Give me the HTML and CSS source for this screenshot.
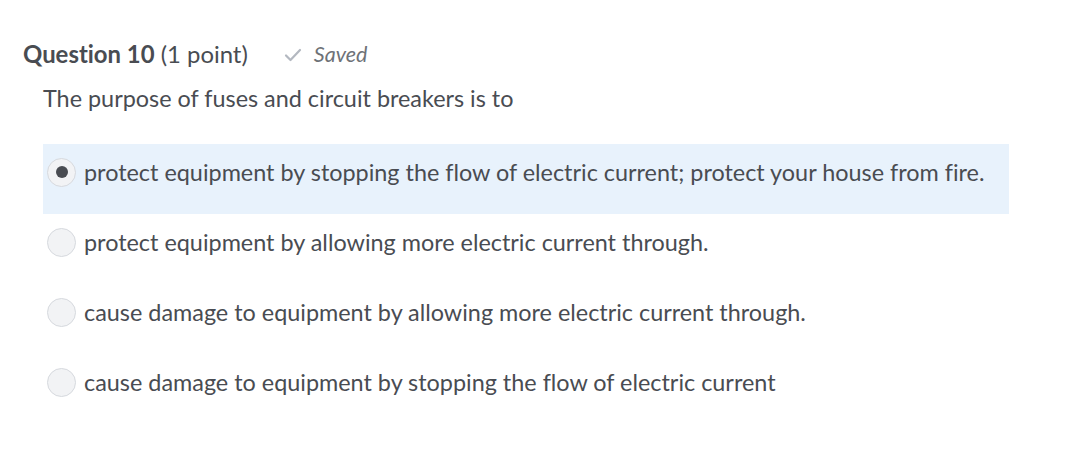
FILE: index.html
```html
<!DOCTYPE html>
<html>
<head>
<meta charset="utf-8">
<link rel="stylesheet" href="styles.css">
</head>
<body>
<div class="question">
  <div class="q-header">
    <h2 class="q-title"><strong>Question 10</strong> <span class="points">(1 point)</span></h2>
    <span class="saved">
      <svg class="check" width="18" height="14" viewBox="0 0 18 14"><path d="M2 7.5 L6.5 12 L16 2" fill="none" stroke="#b3b8c0" stroke-width="2.2" stroke-linecap="round" stroke-linejoin="round"/></svg>
      <em>Saved</em>
    </span>
  </div>
  <p class="q-text">The purpose of fuses and circuit breakers is to</p>
  <div class="options">
    <label class="option selected"><span class="radio"><span class="dot"></span></span><span class="opt-text">protect equipment by stopping the flow of electric current; protect your house from fire.</span></label>
    <label class="option"><span class="radio"></span><span class="opt-text">protect equipment by allowing more electric current through.</span></label>
    <label class="option"><span class="radio"></span><span class="opt-text">cause damage to equipment by allowing more electric current through.</span></label>
    <label class="option"><span class="radio"></span><span class="opt-text">cause damage to equipment by stopping the flow of electric current</span></label>
  </div>
</div>
</body>
</html>
```
FILE: styles.css
```css
html, body {
  margin: 0;
  padding: 0;
  background: #ffffff;
}
body {
  font-family: Lato, "Liberation Sans", sans-serif;
  color: #494c52;
  font-variant-ligatures: none;
}
.question {
  padding: 37px 0 0 23px;
  width: 986px;
}
.q-header {
  display: flex;
  align-items: center;
  height: 34px;
}
.q-title {
  margin: 0;
  font-size: 23.9px;
  font-weight: 400;
  color: #494c52;
  line-height: 34px;
}
.q-title strong {
  font-weight: 700;
}
.saved {
  display: flex;
  align-items: center;
  margin-left: 36px;
  color: #6e7277;
  font-size: 21.5px;
}
.saved .check {
  margin-right: 12px;
  margin-top: 1px;
}
.q-text {
  margin: 12px 0 0 20px;
  font-size: 23.4px;
  line-height: 30px;
  color: #494c52;
}
.options {
  margin: 31px 0 0 20px;
  display: flex;
  flex-direction: column;
}
.option {
  display: flex;
  align-items: center;
  box-sizing: border-box;
  height: 70px;
  padding: 0 0 14px 4px;
  font-size: 23.4px;
  color: #494c52;
}
.option.selected {
  background: #e8f2fc;
}
.radio {
  width: 27px;
  height: 27px;
  border-radius: 50%;
  border: 1px solid #d6d9de;
  background: #f2f3f5;
  display: flex;
  align-items: center;
  justify-content: center;
  margin-right: 8px;
  flex: none;
}
.dot {
  width: 12px;
  height: 12px;
  border-radius: 50%;
  background: #494c52;
}
.opt-text {
  line-height: 30px;
}
```
